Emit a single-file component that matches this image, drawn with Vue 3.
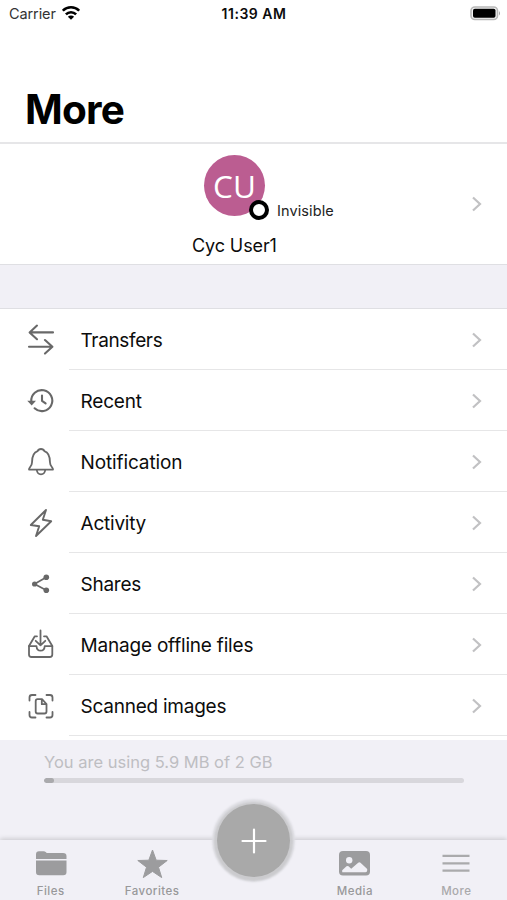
<template>
  <div class="screen">
    <div class="status-bar">
      <div class="status-left">
        <span class="carrier">Carrier</span>
        <svg class="wifi" width="18" height="14" viewBox="0 0 18 14" fill="none" stroke="#000" stroke-width="2.6">
          <path d="M.8 4.700a11.600 11.600 0 0 1 16.400 0" />
          <path d="M3.900 8.300a7.200 7.200 0 0 1 10.200 0" />
          <path d="M9 13.800L5.900 10.700a4.400 4.400 0 0 1 6.200 0z" fill="#000" stroke="none" />
        </svg>
      </div>
      <span class="clock">11:39 AM</span>
      <div class="status-right">
        <svg width="31" height="15" viewBox="0 0 31 15">
          <rect x="1" y="1" width="26.500" height="12.500" rx="3.800" fill="#f4f4f4" stroke="#b8b8b8" stroke-width="1.600" />
          <rect x="3" y="2.800" width="22.500" height="9" rx="1.800" fill="#000" />
          <path d="M29 5q2 2.300 0 4.600z" fill="#a6a6a6" />
        </svg>
      </div>
    </div>

    <header class="title-bar">
      <h1>More</h1>
    </header>

    <section class="profile">
      <div class="profile-info">
        <div class="avatar">
          <span class="initials">CU</span>
          <span class="presence" />
          <span class="presence-label">Invisible</span>
        </div>
        <div class="user-name">Cyc User1</div>
      </div>
      <svg class="chevron" width="12" height="18" viewBox="0 0 12 18"><path d="M2 2.500L9 9l-7 6.500" /></svg>
    </section>

    <div class="gap" />

    <ul class="menu">
      <li v-for="item in items" :key="item.label" class="menu-row">
        <svg class="menu-icon" width="32" height="32" viewBox="0 0 32 32">
          <path v-for="(d, i) in item.lines" :key="'l' + i" :d="d" :stroke-width="item.width" />
          <path v-for="(d, i) in item.fills" :key="'f' + i" :d="d" class="filled" />
        </svg>
        <div class="menu-body">
          <span class="menu-label" :style="{ letterSpacing: item.spacing + 'px' }">{{ item.label }}</span>
          <svg class="chevron" width="12" height="18" viewBox="0 0 12 18"><path d="M2 2.500L9 9l-7 6.500" /></svg>
        </div>
      </li>
    </ul>

    <section class="storage">
      <div class="storage-text">You are using 5.9 MB of 2 GB</div>
      <div class="track"><div class="used" /></div>
    </section>

    <nav class="tab-bar">
      <div class="tab">
        <svg width="34" height="32" viewBox="0 0 34 32">
          <path d="M2 11V6.300q0-3 3-3h4.500q1.500 0 2.500 1l.7.7H29q3.500 0 3.500 3.300V11z" />
          <path d="M2 12.500h30.500V24q0 3.300-3.300 3.300H5.300Q2 27.300 2 24z" />
        </svg>
        <span>Files</span>
      </div>
      <div class="tab">
        <svg width="34" height="32" viewBox="0 0 34 32">
          <path d="M17.500 2l3.700 10.200 11 .3-8.700 6.700 3.200 10.400-9.200-6.200-9.200 6.200 3.200-10.400-8.700-6.700 11-.3z" stroke="#9c9c9e" stroke-linejoin="round" />
        </svg>
        <span>Favorites</span>
      </div>
      <div class="tab tab-center">
        <button class="fab">
          <svg width="28" height="28" viewBox="0 0 28 28"><path d="M14 2.500v23M2.500 14h23" /></svg>
        </button>
      </div>
      <div class="tab">
        <svg width="34" height="32" viewBox="0 0 34 32">
          <rect x="1" y="3" width="31" height="24.500" rx="4" />
          <circle cx="11.200" cy="12.200" r="3.200" fill="#f1f0f6" />
          <path d="M4.200 24.300v-2l4.300-4q1-.8 2 0l2.700 2.500 7-6q1.200-1 2.300 0l6.700 6.200v1.600q0 1.700-1.700 1.700z" fill="#f1f0f6" />
        </svg>
        <span>Media</span>
      </div>
      <div class="tab tab-more">
        <svg width="34" height="32" viewBox="0 0 34 32">
          <path d="M3.500 7.800h27M3.500 15.300h27M3.500 22.600h27" stroke="#aaaaac" stroke-width="2.200" />
        </svg>
        <span>More</span>
      </div>
    </nav>
  </div>
</template>

<script setup>
const items = [
  {
    label: 'Transfers',
    spacing: -0.35,
    width: 2.1,
    lines: ['M28 9.400H4.800M12 2.600L4.600 9.400 12 16.200', 'M4 23.800h23.200M20 17l7.400 6.800-7.400 6.800'],
  },
  {
    label: 'Recent',
    spacing: -0.2,
    width: 2.1,
    lines: ['M6.300 17.500A10.500 10.500 0 1 1 9.600 24.300', 'M17 11.500v5.300l3.600 2.500'],
    fills: ['M2.300 16.700H11L6.700 21.500z'],
  },
  {
    label: 'Notification',
    spacing: -0.12,
    width: 1.8,
    lines: [
      'M4 24.700h24c.3-2.500-3-3-3-7.200 0-6.500-1.500-10-5.600-11.300Q18.600 4 16 4t-3.400 2.200C8.500 7.500 7 11 7 17.500c0 4.200-3.300 4.700-3 7.200z',
      'M11.800 25q.5 4.300 4.200 4.300t4.200-4.300',
    ],
  },
  {
    label: 'Activity',
    spacing: -0.22,
    width: 1.9,
    lines: ['M21 4L5.800 19l8.400 1.300L11 30l15.200-14.800-8.400-1.500z'],
  },
  {
    label: 'Shares',
    spacing: -0.25,
    width: 1.7,
    lines: ['M21.300 10.300L9.500 17l11.800 6.300'],
    fills: [
      'M18.500 10.300a2.800 2.800 0 1 0 5.600 0a2.800 2.800 0 1 0-5.600 0z',
      'M7 17a2.600 2.600 0 1 0 5.200 0a2.600 2.600 0 1 0-5.200 0z',
      'M18.500 23.300a2.800 2.800 0 1 0 5.600 0a2.800 2.800 0 1 0-5.600 0z',
    ],
  },
  {
    label: 'Manage offline files',
    spacing: -0.2,
    width: 1.8,
    lines: [
      'M15.500 2.500v14.800M10.700 12.800l4.800 4.500 4.800-4.500',
      'M12 8.300H9.800L4 18v8.500q0 2.500 2.500 2.500h18.300q2.500 0 2.500-2.500V18L21.500 8.300H19',
      'M4 18.200h7.500q.3 4.500 4.100 4.500t4.100-4.500h7.600',
    ],
  },
  {
    label: 'Scanned images',
    spacing: -0.24,
    width: 1.8,
    lines: [
      'M4.500 11.500V8.500q0-2.500 2.500-2.500h3.500M21.500 6H25q2.500 0 2.500 2.500v3M27.500 23v3q0 2.500-2.500 2.500h-3.500M10.500 28.500H7q-2.500 0-2.500-2.500v-3',
      'M12.500 10.200h4.500l4.500 4.800v7.500q0 2-2 2h-6.800q-2 0-2-2V12.200q0-2 1.800-2zM16.800 10.500v4.700h4.500',
    ],
  },
]
</script>

<style>
body {
  margin: 0;
  background: #fff;
}
</style>

<style scoped>
.screen {
  width: 507px;
  height: 900px;
  display: flex;
  flex-direction: column;
  overflow: hidden;
  background: #fff;
  color: #0c0c0c;
  font-family: Inter, 'Liberation Sans', sans-serif;
}

.status-bar {
  height: 27px;
  display: grid;
  grid-template-columns: 1fr auto 1fr;
  align-items: center;
  padding: 0 6px 0 9px;
  flex-shrink: 0;
}

.status-left {
  display: flex;
  align-items: center;
  gap: 6px;
}

.carrier {
  font-size: 14.5px;
  letter-spacing: -0.1px;
  color: #333;
}

.wifi {
  margin-bottom: 2px;
}

.clock {
  font-size: 14px;
  font-weight: 600;
  letter-spacing: 0.5px;
  margin-right: 2px;
}

.status-right {
  display: flex;
  justify-content: flex-end;
}

.title-bar {
  height: 117px;
  box-sizing: border-box;
  padding: 58px 0 0 25px;
  border-bottom: 2px solid #e6e6e8;
  flex-shrink: 0;
}

h1 {
  margin: 0;
  font-size: 40.5px;
  line-height: 50px;
  font-weight: 700;
  letter-spacing: -0.8px;
  color: #000;
}

.profile {
  height: 120px;
  display: flex;
  align-items: center;
  justify-content: space-between;
  padding: 0 24px 0 192px;
  flex-shrink: 0;
}

.profile-info {
  height: 100%;
}

.avatar {
  position: relative;
  width: 61px;
  height: 61px;
  margin: 11px 0 0 12px;
  border-radius: 50%;
  background: #bb5d91;
  color: #fff;
  text-align: center;
}

.initials {
  font-family: 'Open Sans', sans-serif;
  font-size: 31.5px;
  line-height: 61px;
}

.presence {
  position: absolute;
  left: 45px;
  top: 45px;
  width: 12px;
  height: 12px;
  border: 4px solid #000;
  border-radius: 50%;
  background: #fff;
}

.presence-label {
  position: absolute;
  left: 73px;
  top: 46px;
  font-size: 14.5px;
  line-height: 20px;
  letter-spacing: 0.1px;
  color: #222;
}

.user-name {
  margin-top: 17px;
  font-size: 18px;
  line-height: 26px;
  letter-spacing: -0.1px;
}

.chevron {
  fill: none;
  stroke: #c1c1c3;
  stroke-width: 2.2;
  flex-shrink: 0;
}

.gap {
  height: 43px;
  border-top: 1px solid #dfdfe3;
  border-bottom: 1px solid #dfdfe3;
  background: #f1f0f6;
  flex-shrink: 0;
}

.menu {
  list-style: none;
  margin: 0;
  padding: 0;
  height: 431px;
  flex-shrink: 0;
}

.menu-row {
  height: 61px;
  display: flex;
  align-items: center;
  padding-left: 25px;
}

.menu-icon {
  fill: none;
  stroke: #686868;
  stroke-linecap: round;
  stroke-linejoin: round;
  margin: 0 12px 2px 0;
  flex-shrink: 0;
}

.menu-icon .filled {
  fill: #686868;
  stroke: none;
}

.menu-body {
  flex: 1;
  height: 61px;
  box-sizing: border-box;
  display: flex;
  align-items: center;
  justify-content: space-between;
  padding: 1px 24px 0 11.5px;
  border-bottom: 1px solid #e6e6e7;
}

.menu-label {
  padding-top: 1px;
  font-size: 19px;
  white-space: nowrap;
}

.storage {
  flex: 1;
  padding: 11px 43px 0 44px;
  background: #f1f0f6;
}

.storage-text {
  font-size: 16.5px;
  line-height: 22px;
  color: #bebec2;
}

.track {
  height: 5px;
  margin-top: 5px;
  border-radius: 3px;
  background: #d8d7dc;
  overflow: hidden;
}

.used {
  width: 10px;
  height: 5px;
  border-radius: 3px;
  background: #aaaaad;
}

.tab-bar {
  height: 60px;
  display: grid;
  grid-template-columns: repeat(5, 1fr);
  background: #f1f0f6;
  box-shadow: 0 -1px 5px rgba(0, 0, 0, 0.18);
  flex-shrink: 0;
}

.tab {
  display: flex;
  flex-direction: column;
  align-items: center;
  padding-top: 8px;
  font-size: 11.5px;
  font-weight: 500;
  line-height: 16px;
  letter-spacing: 0.45px;
  color: #98989a;
}

.tab svg {
  fill: #9c9c9e;
}

.tab span {
  margin-top: 3px;
}

.tab-more {
  color: #a9a9ab;
}

.tab-center {
  position: relative;
}

.fab {
  position: absolute;
  top: -36px;
  left: 50%;
  width: 73px;
  height: 73px;
  margin-left: -36px;
  padding: 0;
  border: none;
  border-radius: 50%;
  background: #a9a9a9;
  box-shadow: 0 1px 2px 3px #cbcbce, 0 0 2px 5px #dedee3;
  display: flex;
  align-items: center;
  justify-content: center;
}

.fab svg {
  fill: none;
  stroke: #fff;
  stroke-width: 2.2;
  stroke-linecap: round;
}
</style>
